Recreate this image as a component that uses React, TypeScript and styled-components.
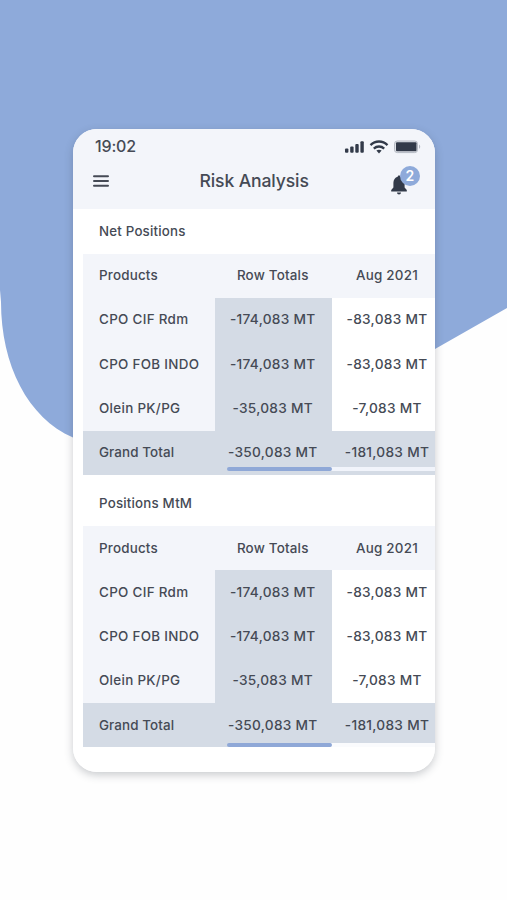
import React from "react";
import styled, { createGlobalStyle } from "styled-components";

const GlobalStyle = createGlobalStyle`
  * { box-sizing: border-box; }
  body { margin: 0; background: #fefefe; }
`;

const Page = styled.div`
  position: relative;
  width: 507px;
  height: 900px;
  padding: 128.5px 0 0 73px;
  overflow: hidden;
  font-family: Inter, sans-serif;
  color: #454a55;
`;

const Backdrop = styled.svg`
  position: absolute;
  inset: 0;
`;

const Phone = styled.main`
  position: relative;
  width: 362.3px;
  height: 643.5px;
  border-radius: 24px;
  overflow: hidden;
  background: #fff;
`;

const Shadow = styled.div`
  position: relative;
  width: 362.3px;
  border-radius: 24px;
  box-shadow: 0 3px 9px rgba(45, 50, 65, 0.25);
`;

const Header = styled.header`
  height: 80.5px;
  background: #f3f5fa;
`;

const StatusBar = styled.div`
  height: 36px;
  padding: 0 13px 0 22px;
  display: flex;
  align-items: center;
  justify-content: space-between;
`;

const Clock = styled.span`
  padding-bottom: 1px;
  font-size: 16px;
  font-weight: 500;
  letter-spacing: -0.15px;
`;

const TitleBar = styled.div`
  height: 34px;
  display: grid;
  grid-template-columns: 60px 1fr 60px;
  align-items: center;
`;

const MenuButton = styled.button`
  display: flex;
  padding: 0 0 2px 20px;
  border: 0;
  background: none;
`;

const Title = styled.h1`
  margin: 0;
  padding-bottom: 2px;
  text-align: center;
  font-size: 17.6px;
  line-height: 24px;
  font-weight: 500;
  letter-spacing: -0.13px;
`;

const Notifications = styled.div`
  position: relative;
  height: 34px;
  padding: 10px 0 0 15px;
`;

const Badge = styled.span`
  position: absolute;
  left: 24.7px;
  top: 1px;
  width: 20px;
  height: 20px;
  border-radius: 50%;
  background: #8eaada;
  color: #fff;
  font-size: 14px;
  font-weight: 600;
  line-height: 20px;
  text-align: center;
`;

const Section = styled.section`
  padding-left: 10px;
`;

const SectionTitle = styled.h2<{ $height: number; $drop?: number }>`
  margin: 0;
  height: ${(p) => p.$height}px;
  padding: ${(p) => p.$drop ?? 0}px 0 0 16px;
  display: flex;
  align-items: center;
  font-size: 13.3px;
  font-weight: 500;
  letter-spacing: 0.2px;
`;

const Table = styled.div`
  position: relative;
`;

const Row = styled.div<{ $tone?: string }>`
  display: grid;
  grid-template-columns: 132px 116.5px 112px;
  height: 44.25px;
  background: ${(p) => p.$tone ?? "#fff"};
`;

const Cell = styled.div<{ $tone?: string; $label?: boolean; $spacing?: number }>`
  display: flex;
  align-items: center;
  justify-content: ${(p) => (p.$label ? "flex-start" : "center")};
  padding: 0 ${(p) => (p.$label ? "0 1px 16px" : "1px 1px 0")};
  background: ${(p) => p.$tone ?? "transparent"};
  font-size: 13.4px;
  font-weight: 500;
  letter-spacing: ${(p) => p.$spacing ?? 0.2}px;
  white-space: nowrap;
`;

const Amount = styled(Cell)`
  font-size: 13.7px;
  letter-spacing: 0.28px;
`;

const ScrollTrack = styled.div<{ $top: number; $color: string }>`
  position: absolute;
  left: 248px;
  right: 0;
  top: ${(p) => p.$top}px;
  height: 4px;
  background: ${(p) => p.$color};
`;

const ScrollThumb = styled.div<{ $top: number }>`
  position: absolute;
  left: 144px;
  width: 104.5px;
  top: ${(p) => p.$top}px;
  height: 4px;
  border-radius: 2px;
  background: #8fa8d7;
`;

const rows = [
  ["CPO CIF Rdm", "-174,083 MT", "-83,083 MT"],
  ["CPO FOB INDO", "-174,083 MT", "-83,083 MT"],
  ["Olein PK/PG", "-35,083 MT", "-7,083 MT"],
];

const PALE = "#f3f5fa";
const STEEL = "#d4dbe5";

function PositionsTable({ scrollTop, track }: { scrollTop: number; track: string }) {
  return (
    <Table>
      <Row $tone={PALE}>
        <Cell $label>Products</Cell>
        <Cell>Row Totals</Cell>
        <Cell $spacing={0.25}>Aug 2021</Cell>
      </Row>
      {rows.map(([name, total, month]) => (
        <Row key={name}>
          <Cell $label $tone={PALE} $spacing={0.32}>{name}</Cell>
          <Amount $tone={STEEL}>{total}</Amount>
          <Amount>{month}</Amount>
        </Row>
      ))}
      <Row $tone={STEEL}>
        <Cell $label $spacing={0.1}>Grand Total</Cell>
        <Amount>-350,083 MT</Amount>
        <Amount>-181,083 MT</Amount>
      </Row>
      <ScrollTrack $top={scrollTop} $color={track} />
      <ScrollThumb $top={scrollTop} />
    </Table>
  );
}

function StatusIcons() {
  return (
    <svg width="78" height="16" viewBox="0 0 78 16" fill="#323a49">
      <rect x="1" y="9.4" width="3.4" height="4.4" rx="1" />
      <rect x="6.2" y="7.4" width="3.4" height="6.4" rx="1" />
      <rect x="11.3" y="5" width="3.4" height="8.8" rx="1" />
      <rect x="16.4" y="2.3" width="3.4" height="11.5" rx="1" />
      <g fill="none" stroke="#323a49" strokeWidth="2.3">
        <path d="M26.5 6.1C31.4 1.3 38.6 1.3 43.5 6.1" />
        <path d="M29.8 9.6C32.8 6.8 37.2 6.8 40.2 9.6" />
      </g>
      <path d="M32.4 11.6Q35 9.8 37.6 11.6L35 14.4Z" />
      <rect x="50.5" y="2" width="23" height="11.6" rx="2.8" fill="#dfe2e8" stroke="#b6bbc4" strokeWidth="1" />
      <rect x="52" y="3.3" width="20.5" height="9" rx="1" />
      <path d="M75 5.6Q77.5 7.8 75 10Z" fill="#b6bbc4" />
    </svg>
  );
}

export default function App() {
  return (
    <>
      <GlobalStyle />
      <Page>
        <Backdrop width="507" height="900" viewBox="0 0 507 900">
          <path
            d="M0 0H507V308L435 349L290 432C220 467 130 461 73 437.5C28 418 1 365 1 302L0 290Z"
            fill="#8eaada"
          />
        </Backdrop>
        <Shadow>
          <Phone>
            <Header>
              <StatusBar>
                <Clock>19:02</Clock>
                <StatusIcons />
              </StatusBar>
              <TitleBar>
                <MenuButton aria-label="Menu">
                  <svg width="16" height="12" viewBox="0 0 16 12" stroke="#454a55" strokeWidth="2" strokeLinecap="round">
                    <path d="M1 1.3H15M1 6H15M1 10.7H15" />
                  </svg>
                </MenuButton>
                <Title>Risk Analysis</Title>
                <Notifications>
                  <svg width="18" height="20" viewBox="0 0 18 20" fill="#323a49">
                    <path d="M9 0.5C9.8 0.5 10.3 1 10.3 1.8C13 2.5 14.6 4.8 14.6 7.8V12.5L16.8 15V16.6H1.2V15L3.4 12.5V7.8C3.4 4.8 5 2.5 7.7 1.8C7.7 1 8.2 0.5 9 0.5Z" />
                    <path d="M7 17.6H11C11 18.8 10.1 19.6 9 19.6S7 18.8 7 17.6Z" />
                  </svg>
                  <Badge>2</Badge>
                </Notifications>
              </TitleBar>
            </Header>
            <Section>
              <SectionTitle $height={44.5}>Net Positions</SectionTitle>
              <PositionsTable scrollTop={213.5} track="#f1f4fb" />
            </Section>
            <Section>
              <SectionTitle $height={51.25} $drop={6}>Positions MtM</SectionTitle>
              <PositionsTable scrollTop={217} track="#fafbfd" />
            </Section>
          </Phone>
        </Shadow>
      </Page>
    </>
  );
}
